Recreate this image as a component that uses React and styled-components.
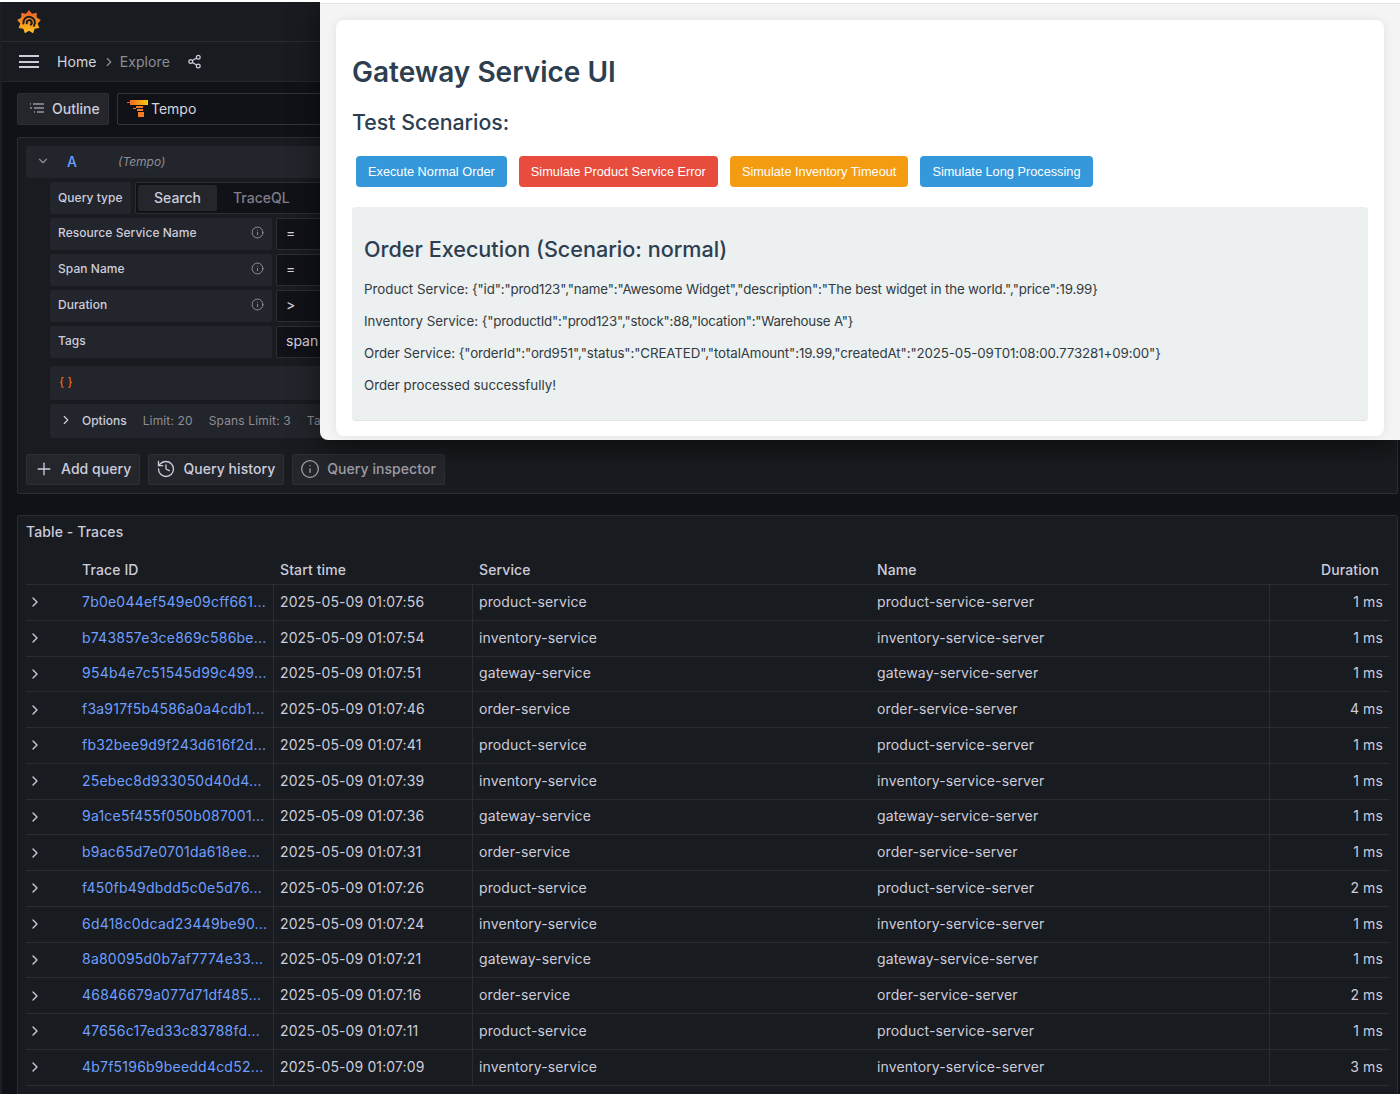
import React from "react";
import styled, { createGlobalStyle } from "styled-components";
import { ChevronDown, ChevronRight, History, Info, Plus, Share2 } from "lucide-react";

const GlobalStyle = createGlobalStyle`
  html, body { margin: 0; padding: 0; background: #111217; }
  * { box-sizing: border-box; }
`;

const Page = styled.div`
  position: relative;
  width: 1400px;
  height: 1094px;
  overflow: hidden;
  background: #111217;
  border-top: 2px solid #ffffff;
  font-family: Inter, "Noto Sans", sans-serif;
  color: #ccccdc;

  &::before {
    content: "";
    position: absolute;
    left: 0;
    top: 0;
    bottom: 0;
    width: 2px;
    background: #1c1f26;
  }
`;

const TopBar = styled.div`
  height: 40px;
  display: flex;
  align-items: center;
  padding-left: 17px;
  background: #181b1f;
  border-bottom: 1px solid #2a2c32;
`;

const NavBar = styled.div`
  height: 40px;
  display: flex;
  align-items: center;
  padding-left: 19px;
  background: #181b1f;
  border-bottom: 1px solid #24262c;
  font-size: 14px;
`;

const Burger = styled.div`
  width: 20px;
  height: 13px;
  margin-right: 18px;
  display: flex;
  flex-direction: column;
  justify-content: space-between;
  span { display: block; height: 2px; background: #ccccdc; }
`;

const Crumb = styled.span`
  color: ${(p) => (p.$dim ? "#8e8e96" : "#d4d4de")};
  letter-spacing: 0.1px;
`;

const CrumbSep = styled.span`
  display: flex;
  margin: 0 4px 0 5px;
  color: #8e8e96;
`;

const ShareBtn = styled.span`
  display: flex;
  margin-left: 17px;
  color: #ccccdc;
`;

const Toolbar = styled.div`
  display: flex;
  gap: 8px;
  padding: 11px 0 12px 17px;
`;

const OutlineBtn = styled.div`
  width: 92px;
  height: 32px;
  display: flex;
  align-items: center;
  gap: 7px;
  padding: 0 0 2px 11px;
  background: #24262c;
  border: 1px solid #2c2e34;
  border-radius: 2px;
  font-size: 14px;
  font-weight: 500;
  color: #ccccdc;
`;

const DsSelect = styled.div`
  width: 300px;
  height: 32px;
  display: flex;
  align-items: center;
  gap: 3px;
  padding: 0 0 2px 9px;
  background: #111217;
  border: 1px solid #33353b;
  border-radius: 2px;
  font-size: 14px;
  color: #d4d4de;
`;

const QueryPanel = styled.section`
  margin: 0 2px 0 17px;
  height: 357px;
  padding: 8px;
  background: #181b1f;
  border: 1px solid #2a2c32;
  border-radius: 2px;
`;

const RowHead = styled.div`
  height: 32px;
  display: flex;
  align-items: center;
  padding: 0 0 2px 10px;
  margin-bottom: 4px;
  background: #22252b;
  border-radius: 2px;
  color: #8e8e96;
`;

const RefId = styled.span`
  width: 51px;
  margin-left: 17px;
  font-size: 14px;
  font-weight: 500;
  color: #6e9fff;
`;

const DsName = styled.span`
  font-size: 12px;
  font-style: italic;
  color: #8e8e96;
`;

const FieldList = styled.div`
  display: flex;
  flex-direction: column;
  gap: 4px;
  padding-left: 24px;
`;

const Field = styled.div`
  display: flex;
  gap: 4px;
  height: 32px;
`;

const FieldLabel = styled.label`
  width: ${(p) => (p.$short ? "81px" : "222px")};
  height: 32px;
  flex: none;
  display: flex;
  align-items: center;
  justify-content: space-between;
  padding: 0 8px ${(p) => (p.$short ? "2px" : "4px")};
  background: #22252b;
  border-radius: 2px;
  font-size: 12px;
  font-weight: 500;
  letter-spacing: 0.05px;
  color: #ccccdc;
`;

const FieldInput = styled.div`
  width: 120px;
  height: 32px;
  display: flex;
  align-items: center;
  padding: 0 0 3px 9px;
  background: #111217;
  border: 1px solid #2c2e34;
  border-radius: 2px;
  font-size: 14px;
  color: #d4d4de;
`;

const Radio = styled.div`
  width: 300px;
  height: 32px;
  display: flex;
  align-items: center;
  padding-left: 2px;
  background: #111217;
  border: 1px solid #2c2e34;
  border-radius: 2px;
`;

const RadioItem = styled.span`
  width: ${(p) => (p.$active ? "79px" : "auto")};
  height: 26px;
  display: flex;
  align-items: center;
  justify-content: center;
  padding: ${(p) => (p.$active ? "0 0 2px" : "0 16px 2px")};
  background: ${(p) => (p.$active ? "#24262c" : "transparent")};
  border-radius: 2px;
  font-size: 14px;
  font-weight: 500;
  color: ${(p) => (p.$active ? "#ccccdc" : "#7e7e88")};
`;

const Editor = styled.div`
  margin: 8px 0 0 24px;
  height: 34px;
  display: flex;
  align-items: center;
  padding: 0 0 3px 9px;
  background: #22252b;
  border-radius: 2px;
  font-size: 12px;
  color: #ff780a;
`;

const Options = styled.div`
  margin: 4px 0 0 24px;
  height: 34px;
  display: flex;
  align-items: center;
  padding: 0 0 2px 9px;
  background: #22252b;
  border-radius: 2px;
  font-size: 12px;
  color: #8e8e96;
`;

const OptionsTitle = styled.span`
  margin: 0 16px 0 9px;
  font-weight: 500;
  color: #ccccdc;
`;

const OptionsItem = styled.span`
  margin-right: 16px;
  letter-spacing: 0.15px;
  white-space: nowrap;
`;

const Actions = styled.div`
  display: flex;
  gap: 8px;
  margin-top: 16px;
`;

const ActionBtn = styled.button`
  height: 31px;
  display: flex;
  align-items: center;
  gap: 7px;
  padding: 0 8px 2px 7px;
  background: #24262c;
  border: 1px solid #2c2e34;
  border-radius: 2px;
  font-family: inherit;
  font-size: 14px;
  font-weight: 500;
  letter-spacing: 0.06px;
  color: ${(p) => (p.$dim ? "#a0a0a8" : "#ccccdc")};
`;

const TablePanel = styled.section`
  margin: 21px 2px 0 17px;
  height: 600px;
  padding: 0 8px;
  background: #181b1f;
  border: 1px solid #2a2c32;
  border-radius: 2px;
`;

const PanelTitle = styled.h2`
  margin: 0;
  height: 32px;
  padding-bottom: 2px;
  display: flex;
  align-items: center;
  font-size: 14px;
  font-weight: 500;
  letter-spacing: 0.1px;
  color: #ccccdc;
`;

const Table = styled.div`
  width: 1363px;
  margin-top: 5px;
  font-size: 14px;
  letter-spacing: 0.12px;
`;

const HeadRow = styled.div`
  display: grid;
  grid-template-columns: 56px 198px 199px 398px 271px 241px;
  height: 32px;
  padding-top: 2px;
  align-items: center;
  border-bottom: 1px solid #2a2c32;
  font-weight: 500;
  color: #ccccdc;
`;

const HeadCell = styled.div`
  text-align: ${(p) => (p.$right ? "right" : "left")};
  padding-right: ${(p) => (p.$right ? "10px" : "0")};
`;

const BodyRow = styled.div`
  display: grid;
  grid-template-columns: 48px 199px 199px 398px 399px 120px;
  height: 35.75px;
  align-items: stretch;
  border-bottom: 1px solid #2a2c32;
`;

const Cell = styled.div`
  display: flex;
  align-items: center;
  min-width: 0;
  padding: 0 6px 2px ${(p) => (p.$flush ? "8px" : p.$rule ? "6px" : "7px")};
  border-left: ${(p) => (p.$rule ? "1px solid #2a2c32" : "none")};
  justify-content: ${(p) => (p.$right ? "flex-end" : "flex-start")};
  color: #ccccdc;
`;

const ExpandCell = styled.div`
  display: flex;
  align-items: center;
  padding-left: 1px;
  color: #ccccdc;
`;

const TraceLink = styled.a`
  display: block;
  white-space: nowrap;
  letter-spacing: 0.22px;
  color: #6e9fff;
`;

// the browser window of the other app, lying over the Grafana page
const Overlay = styled.div`
  position: absolute;
  top: 0;
  left: 320px;
  width: 1080px;
  height: 438px;
  padding: 17px 16px 4px;
  background: #f4f4f4;
  border-top: 1px solid #ffffff;
  border-bottom-left-radius: 8px;
  box-shadow: inset 0 1px 0 #e2e2e2, 0 6px 30px rgba(0, 0, 0, 0.5);
  font-family: "Liberation Sans", Arial, sans-serif;
`;

const Card = styled.div`
  height: 416px;
  padding: 16px;
  background: #ffffff;
  border-radius: 8px;
  box-shadow: 0 0 10px rgba(0, 0, 0, 0.08);
`;

const Title = styled.h1`
  margin: 19px 0 0;
  font-family: Inter, sans-serif;
  font-size: 28px;
  line-height: 35px;
  font-weight: 600;
  color: #2c3e50;
`;

const SubTitle = styled.h2`
  margin: 19px 0 0;
  font-family: Inter, sans-serif;
  font-size: 21.3px;
  line-height: 26px;
  font-weight: 500;
  color: #2c3e50;
`;

const Buttons = styled.div`
  display: flex;
  gap: 12px;
  margin: 21px 0 0 4px;
`;

const ScenarioBtn = styled.button`
  height: 31px;
  padding: 0 12px;
  border: none;
  border-radius: 4px;
  background: ${(p) => p.$color};
  font-family: "Liberation Sans", Arial, sans-serif;
  font-size: 12.75px;
  color: #ffffff;
`;

const Result = styled.div`
  height: 214px;
  margin-top: 20px;
  padding: 29px 12px 0;
  background: #ecf0f1;
  border-bottom: 1px solid #dfe3e4;
  border-radius: 4px;
`;

const ResultTitle = styled.h3`
  margin: 0 0 10px;
  font-family: Inter, sans-serif;
  font-size: 21.6px;
  line-height: 27px;
  font-weight: 500;
  color: #2c3e50;
`;

const ResultLine = styled.p`
  margin: 0;
  height: 32px;
  line-height: 32px;
  font-family: Inter, sans-serif;
  font-size: 13.3px;
  color: #333a40;
  white-space: nowrap;
`;

const Json = styled.span`
  letter-spacing: ${(p) => p.$track}px;
`;

// gear outline: teeth around the centre of a 24 box
const gearPoints = Array.from({ length: 18 }, (_, i) => {
  const a = (i * Math.PI) / 9 - Math.PI / 2;
  const r = i % 2 === 0 ? 12 : 8.8;
  return `${(12 + r * Math.cos(a)).toFixed(2)},${(12 + r * Math.sin(a)).toFixed(2)}`;
}).join(" ");

const GrafanaLogo = () => (
  <svg width="24" height="24" viewBox="0 0 24 24">
    <defs>
      <linearGradient id="gf" x1="0.5" y1="1" x2="0.5" y2="0">
        <stop offset="0" stopColor="#fcc31e" />
        <stop offset="1" stopColor="#f05a28" />
      </linearGradient>
    </defs>
    <polygon fill="url(#gf)" points={gearPoints} />
    <path
      fill="none"
      stroke="#181b1f"
      strokeWidth="2"
      strokeLinecap="round"
      d="M6.4 13.4a5.8 5.8 0 1 1 10.6 2.4M9.8 13.2a2.5 2.5 0 1 1 4 1.4"
    />
  </svg>
);

const TempoLogo = () => (
  <svg width="21" height="17" viewBox="0 0 21 17">
    <defs>
      <linearGradient id="tp" x1="0" y1="0" x2="1" y2="0">
        <stop offset="0" stopColor="#f05a28" />
        <stop offset="1" stopColor="#fbca0a" />
      </linearGradient>
    </defs>
    <path fill="url(#tp)" d="M3 0h18v5H3zM0 2h3v1H0z" />
    <path fill="#f57a24" d="M9 6h7v2H9zM10 9h6v2h-6zM11 12h6v5h-6zM6 8h3v1H6z" />
  </svg>
);

const OutlineIcon = () => (
  <svg width="16" height="16" viewBox="0 0 16 16" stroke="#ccccdc" strokeWidth="1.1" fill="none">
    <path d="M1 4h1M4 4h11M5 8h10M1 8h2M8 12h7M5 12h1" />
  </svg>
);

const InfoMark = () => <Info size={13} color="#9d9da5" strokeWidth={1.6} />;

const rows = [
  ["7b0e044ef549e09cff661...", "01:07:56", "product", "1"],
  ["b743857e3ce869c586be...", "01:07:54", "inventory", "1"],
  ["954b4e7c51545d99c499...", "01:07:51", "gateway", "1"],
  ["f3a917f5b4586a0a4cdb1...", "01:07:46", "order", "4"],
  ["fb32bee9d9f243d616f2d...", "01:07:41", "product", "1"],
  ["25ebec8d933050d40d4...", "01:07:39", "inventory", "1"],
  ["9a1ce5f455f050b087001...", "01:07:36", "gateway", "1"],
  ["b9ac65d7e0701da618ee...", "01:07:31", "order", "1"],
  ["f450fb49dbdd5c0e5d76...", "01:07:26", "product", "2"],
  ["6d418c0dcad23449be90...", "01:07:24", "inventory", "1"],
  ["8a80095d0b7af7774e33...", "01:07:21", "gateway", "1"],
  ["46846679a077d71df485...", "01:07:16", "order", "2"],
  ["47656c17ed33c83788fd...", "01:07:11", "product", "1"],
  ["4b7f5196b9beedd4cd52...", "01:07:09", "inventory", "3"],
];

const fields = [
  { label: "Resource Service Name", op: "=", info: true },
  { label: "Span Name", op: "=", info: true },
  { label: "Duration", op: ">", info: true },
  { label: "Tags", op: "span", info: false },
];

export default function App() {
  return (
    <Page>
      <GlobalStyle />
      <TopBar>
        <GrafanaLogo />
      </TopBar>
      <NavBar>
        <Burger>
          <span />
          <span />
          <span />
        </Burger>
        <Crumb>Home</Crumb>
        <CrumbSep>
          <ChevronRight size={14} />
        </CrumbSep>
        <Crumb $dim>Explore</Crumb>
        <ShareBtn>
          <Share2 size={15} />
        </ShareBtn>
      </NavBar>

      <Toolbar>
        <OutlineBtn>
          <OutlineIcon />
          Outline
        </OutlineBtn>
        <DsSelect>
          <TempoLogo />
          Tempo
        </DsSelect>
      </Toolbar>

      <QueryPanel>
        <RowHead>
          <ChevronDown size={14} />
          <RefId>A</RefId>
          <DsName>(Tempo)</DsName>
        </RowHead>
        <FieldList>
          <Field>
            <FieldLabel $short>Query type</FieldLabel>
            <Radio>
              <RadioItem $active>Search</RadioItem>
              <RadioItem>TraceQL</RadioItem>
            </Radio>
          </Field>
          {fields.map((f) => (
            <Field key={f.label}>
              <FieldLabel>
                {f.label}
                {f.info && <InfoMark />}
              </FieldLabel>
              <FieldInput>{f.op}</FieldInput>
            </Field>
          ))}
        </FieldList>
        <Editor>{"{ }"}</Editor>
        <Options>
          <ChevronRight size={14} color="#ccccdc" />
          <OptionsTitle>Options</OptionsTitle>
          <OptionsItem>Limit: 20</OptionsItem>
          <OptionsItem>Spans Limit: 3</OptionsItem>
          <OptionsItem>Table Format: Traces</OptionsItem>
        </Options>
        <Actions>
          <ActionBtn>
            <Plus size={20} strokeWidth={1.6} />
            Add query
          </ActionBtn>
          <ActionBtn>
            <History size={20} strokeWidth={1.6} />
            Query history
          </ActionBtn>
          <ActionBtn $dim>
            <Info size={20} strokeWidth={1.6} />
            Query inspector
          </ActionBtn>
        </Actions>
      </QueryPanel>

      <TablePanel>
        <PanelTitle>Table - Traces</PanelTitle>
        <Table>
          <HeadRow>
            <HeadCell />
            <HeadCell>Trace ID</HeadCell>
            <HeadCell>Start time</HeadCell>
            <HeadCell>Service</HeadCell>
            <HeadCell>Name</HeadCell>
            <HeadCell $right>Duration</HeadCell>
          </HeadRow>
          {rows.map(([id, time, svc, ms]) => (
            <BodyRow key={id}>
              <ExpandCell>
                <ChevronRight size={16} />
              </ExpandCell>
              <Cell $flush>
                <TraceLink>{id}</TraceLink>
              </Cell>
              <Cell $rule>2025-05-09 {time}</Cell>
              <Cell $rule>{svc}-service</Cell>
              <Cell>{svc}-service-server</Cell>
              <Cell $rule $right>
                {ms} ms
              </Cell>
            </BodyRow>
          ))}
        </Table>
      </TablePanel>

      <Overlay>
        <Card>
          <Title>Gateway Service UI</Title>
          <SubTitle>Test Scenarios:</SubTitle>
          <Buttons>
            <ScenarioBtn $color="#3498db">Execute Normal Order</ScenarioBtn>
            <ScenarioBtn $color="#e74c3c">Simulate Product Service Error</ScenarioBtn>
            <ScenarioBtn $color="#f39c12">Simulate Inventory Timeout</ScenarioBtn>
            <ScenarioBtn $color="#3498db">Simulate Long Processing</ScenarioBtn>
          </Buttons>
          <Result>
            <ResultTitle>Order Execution (Scenario: normal)</ResultTitle>
            <ResultLine>
              Product Service:{" "}
              <Json $track={-0.15}>{'{"id":"prod123","name":"Awesome Widget","description":"The best widget in the world.","price":19.99}'}</Json>
            </ResultLine>
            <ResultLine>
              Inventory Service:{" "}
              <Json $track={-0.2}>{'{"productId":"prod123","stock":88,"location":"Warehouse A"}'}</Json>
            </ResultLine>
            <ResultLine>
              Order Service:{" "}
              <Json $track={-0.09}>{'{"orderId":"ord951","status":"CREATED","totalAmount":19.99,"createdAt":"2025-05-09T01:08:00.773281+09:00"}'}</Json>
            </ResultLine>
            <ResultLine>Order processed successfully!</ResultLine>
          </Result>
        </Card>
      </Overlay>
    </Page>
  );
}
